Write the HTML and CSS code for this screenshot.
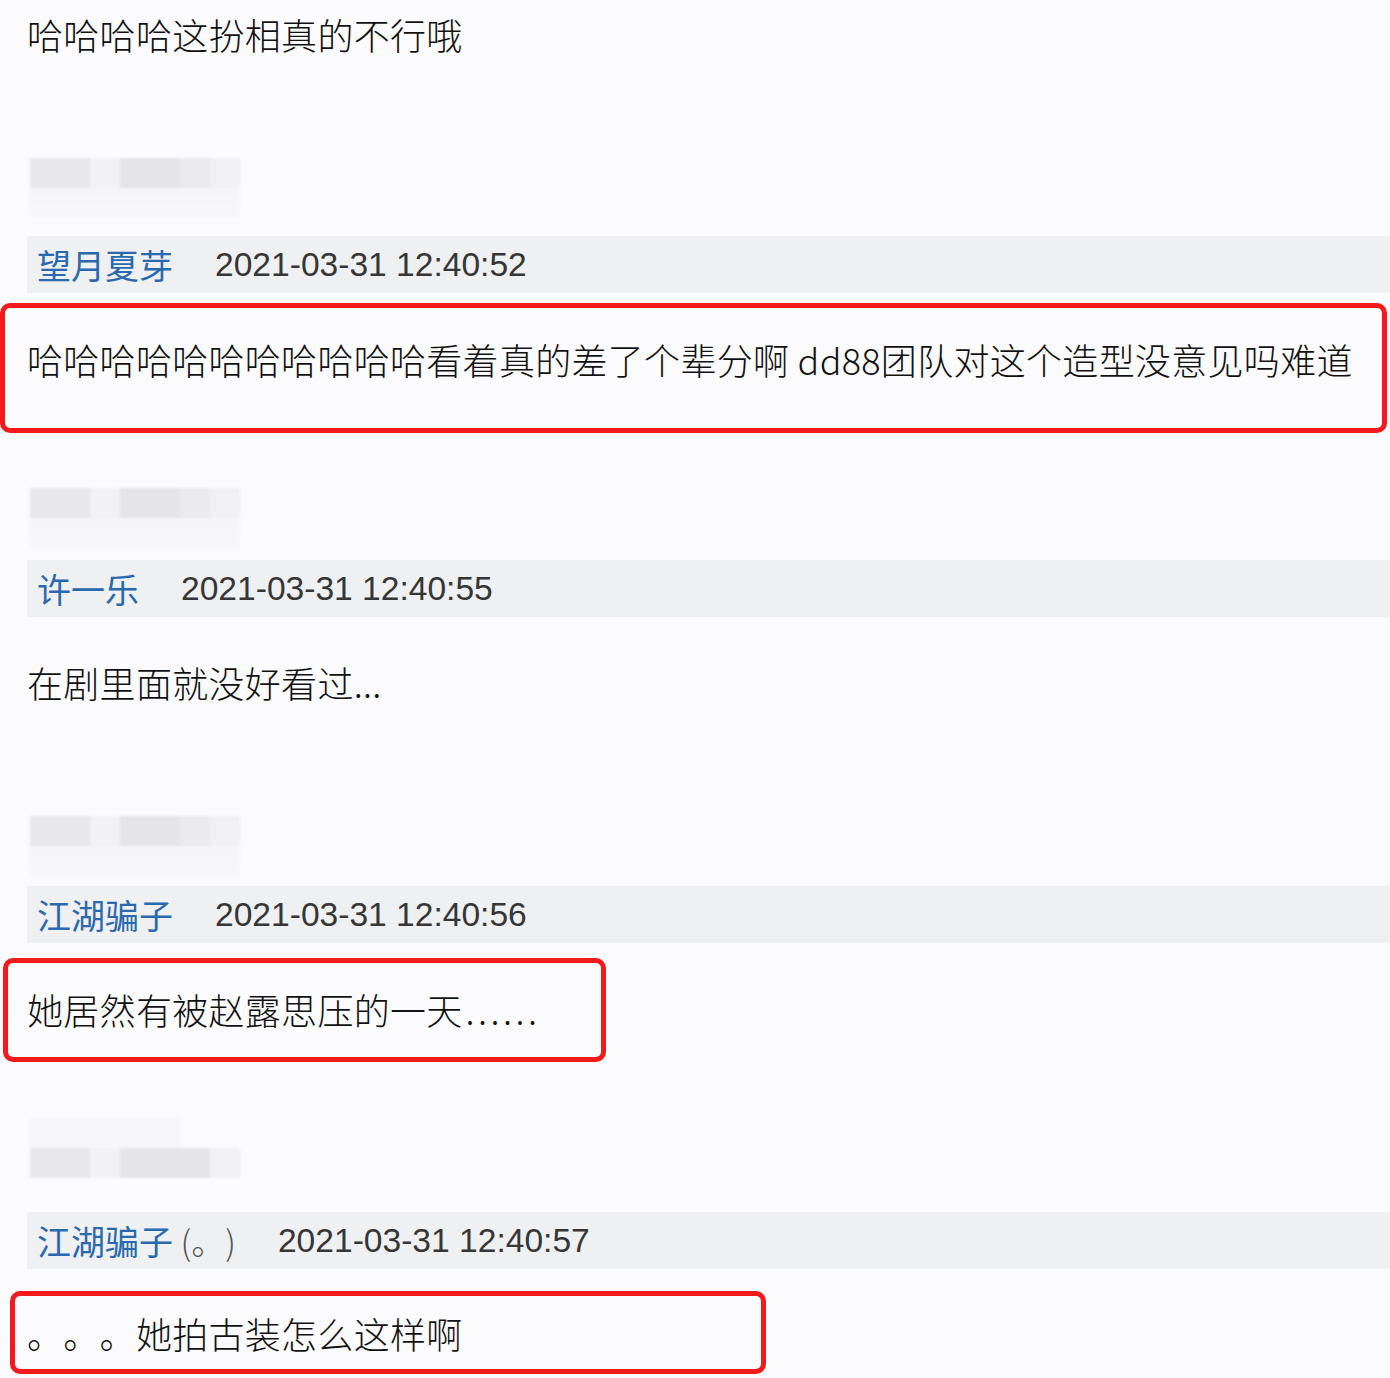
FILE: index.html
```html
<!DOCTYPE html>
<html lang="zh-CN">
<head>
  <meta charset="UTF-8">
  <meta name="viewport" content="width=device-width, initial-scale=1.0">
  <title>评论</title>
  <link rel="stylesheet" href="styles.css">
</head>
<body>
  <div class="feed">
    <p class="text first">哈哈哈哈这扮相真的不行哦</p>

    <div class="comment">
      <div class="blur">
        <div class="blocks"><span class="b1"></span><span class="b2"></span><span class="b3"></span><span class="b4"></span><span class="b5"></span></div>
        <div class="panel"></div>
      </div>
      <div class="meta">
        <span class="name">望月夏芽</span>
        <span class="time">2021-03-31 12:40:52</span>
      </div>
      <p class="text marked mark-wide">哈哈哈哈哈哈哈哈哈哈哈看着真的差了个辈分啊 dd88团队对这个造型没意见吗难道</p>
    </div>

    <div class="comment c2">
      <div class="blur">
        <div class="blocks"><span class="b1"></span><span class="b2"></span><span class="b3"></span><span class="b4"></span><span class="b5"></span></div>
        <div class="panel"></div>
      </div>
      <div class="meta">
        <span class="name">许一乐</span>
        <span class="time">2021-03-31 12:40:55</span>
      </div>
      <p class="text plain">在剧里面就没好看过...</p>
    </div>

    <div class="comment c3">
      <div class="blur">
        <div class="blocks"><span class="b1"></span><span class="b2"></span><span class="b3"></span><span class="b4"></span><span class="b5"></span></div>
        <div class="panel"></div>
      </div>
      <div class="meta">
        <span class="name">江湖骗子</span>
        <span class="time">2021-03-31 12:40:56</span>
      </div>
      <p class="text marked mark-mid">她居然有被赵露思压的一天<span class="dots">......</span></p>
    </div>

    <div class="comment c4">
      <div class="blur top-panel">
        <div class="panel"></div>
        <div class="blocks"><span class="b1"></span><span class="b2"></span><span class="b3"></span><span class="b4"></span><span class="b5"></span></div>
      </div>
      <div class="meta">
        <span class="name">江湖骗子<span class="paren"> (。)</span></span>
        <span class="time">2021-03-31 12:40:57</span>
      </div>
      <p class="text marked mark-short">。。。她拍古装怎么这样啊</p>
    </div>
  </div>
</body>
</html>
```

FILE: styles.css
```css
html, body {
  margin: 0;
  padding: 0;
  background: #fbfbfd;
}
body {
  font-family: "Noto Sans CJK SC", "Liberation Sans", sans-serif;
  font-weight: 300;
  color: #111;
  width: 1390px;
  overflow: hidden;
  text-spacing-trim: space-all;
}
.feed {
  display: flex;
  flex-direction: column;
}
.text {
  margin: 0;
  font-size: 36px;
  line-height: 48px;
  letter-spacing: 0.3px;
  white-space: nowrap;
}
.text.first {
  margin-top: 10px;
  padding-left: 27px;
}
.dots {
  letter-spacing: 3.5px;
  padding-left: 3px;
}
.comment {
  display: flex;
  flex-direction: column;
}

/* blurred avatar / username area */
.blur {
  margin-left: 30px;
  width: 210px;
  display: flex;
  flex-direction: column;
  filter: blur(1px);
}
.blocks {
  display: flex;
  height: 30px;
}
.blocks span {
  height: 100%;
}
.b1 { width: 60px; background: #e8e8ea; }
.b2 { width: 30px; background: #f2f2f4; }
.b3 { width: 60px; background: #e5e5e8; }
.b4 { width: 30px; background: #ebebed; }
.b5 { width: 30px; background: #f1f1f3; }
.panel {
  height: 30px;
  background: linear-gradient(#f5f5f7, #f8f8fa);
}
.comment .blur { margin-top: 100px; }
.c2 .blur { margin-top: 55px; }
.c3 .blur { margin-top: 110px; }
.c4 .blur { margin-top: 56px; }
.c4 .panel { width: 150px; background: #f6f6f8; }
.c4 .b3 { width: 90px; }
.c4 .b4 { display: none; }

/* name + time bar */
.meta {
  margin-left: 27px;
  margin-top: 18px;
  height: 57px;
  padding-left: 10px;
  background: #eef0f2;
  display: flex;
  align-items: center;
  gap: 42px;
}
.c2 .meta { margin-top: 12px; }
.c3 .meta { margin-top: 10px; }
.c4 .meta { margin-top: 34px; }
.name {
  font-size: 34px;
  font-weight: 400;
  color: #2a68b0;
  white-space: nowrap;
}
.paren {
  color: #555;
  font-weight: 300;
}
.time {
  font-family: "Liberation Sans", sans-serif;
  font-weight: 400;
  font-size: 33.6px;
  color: #363636;
}

/* plain comment body */
.text.plain {
  margin-top: 41px;
  padding-left: 27px;
}

/* red hand-drawn marks */
.marked {
  border: 5px solid #f31a1b;
  border-radius: 10px;
  box-sizing: border-box;
}
.mark-wide {
  margin-top: 10px;
  width: 1387px;
  height: 130px;
  padding: 27px 0 0 22px;
}
.mark-mid {
  margin-top: 15px;
  margin-left: 3px;
  width: 603px;
  height: 104px;
  padding: 22px 0 0 19px;
}
.mark-short {
  margin-top: 22px;
  margin-left: 10px;
  width: 756px;
  height: 83px;
  padding: 13px 0 0 12px;
}
```
